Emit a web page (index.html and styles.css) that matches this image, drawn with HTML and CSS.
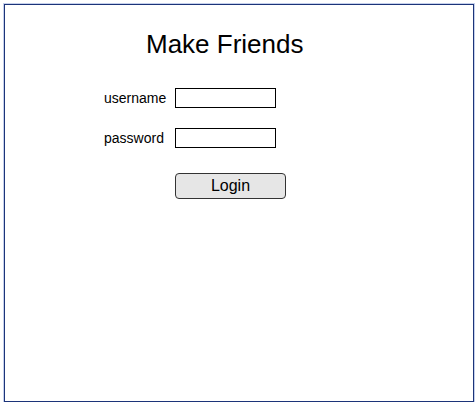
FILE: index.html
```html
<!DOCTYPE html>
<html>
<head>
<meta charset="utf-8">
<link rel="stylesheet" href="styles.css">
</head>
<body>
<div class="frame">
  <h1 class="title">Make Friends</h1>
  <form class="login-form">
    <label class="field-label" for="username">username</label>
    <input class="field-input" id="username" type="text">
    <label class="field-label" for="password">password</label>
    <input class="field-input" id="password" type="password">
    <span></span>
    <button class="login-button" type="button">Login</button>
  </form>
</div>
</body>
</html>
```
FILE: styles.css
```css
html, body {
  margin: 0;
  padding: 0;
  background: #ffffff;
}

body {
  font-family: "Liberation Sans", Arial, sans-serif;
  color: #000000;
}

.frame {
  box-sizing: border-box;
  width: 470px;
  height: 398px;
  margin: 4px 0 0 4px;
  border: 1px solid #1c3479;
  box-shadow: 0 0 0 1px rgba(90, 120, 200, 0.35);
}

.title {
  margin: 0;
  padding: 24px 0 0 141px;
  font-size: 26px;
  font-weight: normal;
  line-height: 30px;
}

.login-form {
  display: grid;
  grid-template-columns: 71px auto;
  justify-content: start;
  align-items: center;
  row-gap: 20px;
  margin: 29px 0 0 99px;
}

.field-label {
  font-size: 14px;
  line-height: 16px;
  margin-top: -1px;
}

.field-input {
  box-sizing: border-box;
  width: 101px;
  height: 20px;
  margin: 0;
  padding: 0 2px;
  border: 1px solid #000000;
  border-radius: 0;
  font-family: inherit;
  font-size: 13px;
  background: #ffffff;
}

.login-button {
  box-sizing: border-box;
  width: 111px;
  height: 26px;
  margin: 5px 0 0 0;
  padding: 0;
  border: 1px solid #333333;
  border-radius: 4px;
  background: #e6e6e6;
  font-family: inherit;
  font-size: 16px;
  color: #000000;
  line-height: 24px;
}
```
